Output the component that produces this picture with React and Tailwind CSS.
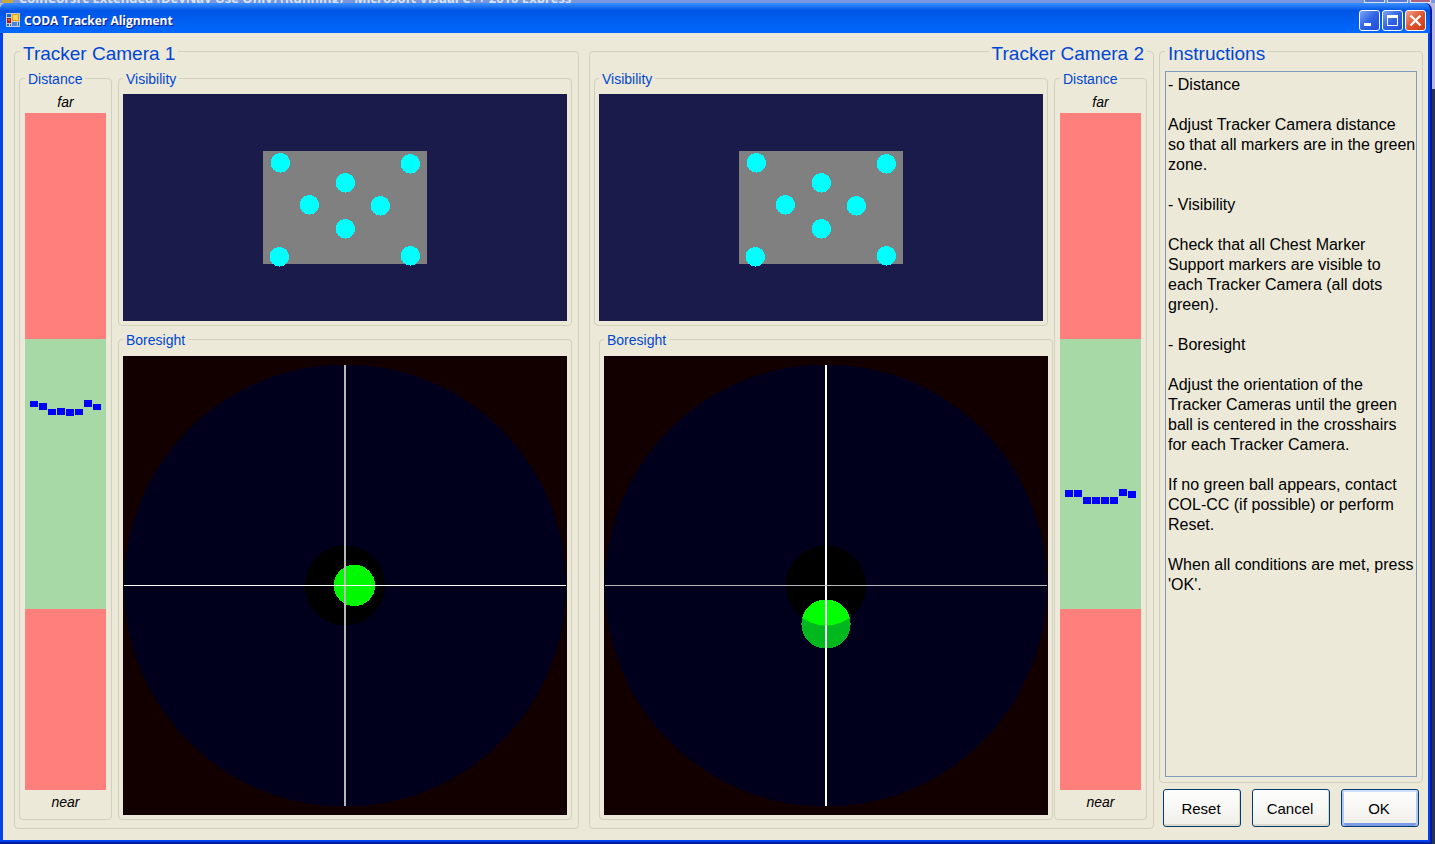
import React, { useId } from "react";

const INSTRUCTIONS = `- Distance

Adjust Tracker Camera distance so that all markers are in the green zone.

- Visibility

Check that all Chest Marker Support markers are visible to each Tracker Camera (all dots green).

- Boresight

Adjust the orientation of the Tracker Cameras until the green ball is centered in the crosshairs for each Tracker Camera.

If no green ball appears, contact COL-CC (if possible) or perform Reset.

When all conditions are met, press 'OK'.`;

const MARKERS = [
  [157, 69],
  [287, 70],
  [222, 89],
  [186, 111],
  [257, 112],
  [222, 135],
  [156, 163],
  [287, 162],
];

const DISTANCE_1 = [[5, 288, 6], [14, 290, 7], [23, 296, 6], [32, 295, 7], [41, 296, 7], [50, 296, 6], [59, 287, 7], [68, 291, 6]];
const DISTANCE_2 = [[5, 377, 7], [14, 377, 7], [23, 384, 7], [32, 384, 7], [41, 384, 7], [50, 384, 7], [59, 376, 7], [68, 378, 7]];

function Group({ title, className = "", children }) {
  return (
    <fieldset className={`min-w-0 rounded-[4px] border border-[#d0d0bf] ${className}`}>
      <legend className="px-[3px] pt-[2px] text-[14px] leading-4 text-[#0046d5]">{title}</legend>
      {children}
    </fieldset>
  );
}

function MainGroup({ title, className = "", legendClass = "", children }) {
  return (
    <fieldset className={`min-w-0 rounded-[4px] border border-[#d0d0bf] ${className}`}>
      <legend className={`px-[3px] pt-[6px] text-[19px] leading-6 text-[#0046d5] ${legendClass}`}>{title}</legend>
      {children}
    </fieldset>
  );
}

function Distance({ blocks }) {
  return (
    <Group title="Distance" className="flex w-[93px] shrink-0 flex-col px-[5px] pb-1">
      <div className="pt-1 text-center text-[14px] leading-[22px] italic">far</div>
      <svg viewBox="0 0 81 677" preserveAspectRatio="none" className="block min-h-0 w-full flex-1 basis-0" shapeRendering="crispEdges" role="img" aria-label="Marker distances">
        <rect width="81" height="677" fill="#ff7f7c" />
        <rect y="226" width="81" height="270" fill="#a6d9a6" />
        {blocks.map(([x, y, h]) => (
          <rect key={x} x={x} y={y} width="8" height={h} fill="#0000ff" />
        ))}
      </svg>
      <div className="text-center text-[14px] leading-[25px] italic">near</div>
    </Group>
  );
}

function Visibility({ className = "" }) {
  return (
    <Group title="Visibility" className={`px-1 pt-[7px] pb-1 ${className}`}>
      <svg viewBox="0 0 444 227" className="block h-auto w-full" shapeRendering="crispEdges" role="img" aria-label="Marker visibility">
        <rect width="444" height="227" fill="#1a1a4b" />
        <rect x="140" y="57" width="164" height="113" fill="#808080" />
        {MARKERS.map(([x, y]) => (
          <circle key={`${x}-${y}`} cx={x + 0.3} cy={y - 0.2} r="9.8" fill="#00ffff" />
        ))}
      </svg>
    </Group>
  );
}

function Boresight({ className = "", ball, outside, inside, vertical, horizontal }) {
  const clip = useId();
  return (
    <Group title="Boresight" className={`px-1 pt-2 pb-1 ${className}`}>
      <svg viewBox="0 0 444 459" className="block h-auto w-full" shapeRendering="crispEdges" role="img" aria-label="Boresight">
        <clipPath id={clip}>
          <circle cx="222" cy="229.5" r="40" />
        </clipPath>
        <rect width="444" height="459" fill="#120000" />
        <circle cx="222" cy="229.5" r="221" fill="#00001c" />
        <circle cx="222" cy="229.5" r="40" fill="#000000" />
        <circle cx={ball.x} cy={ball.y} r={ball.r} fill={outside} />
        <circle cx={ball.x} cy={ball.y} r={ball.r} fill={inside} clipPath={`url(#${clip})`} />
        <rect x="221" y="9" width="2" height="441" fill={vertical} />
        <rect x="1" y="229" width="442" height="1" fill={horizontal} />
      </svg>
    </Group>
  );
}

function AppIcon() {
  return (
    <svg viewBox="0 0 14 14" className="size-[14px]" shapeRendering="crispEdges" aria-hidden="true">
      <rect width="14" height="14" fill="#c8ccd0" />
      <rect x="1" y="1" width="4" height="3" fill="#1d62d8" />
      <rect x="6" y="1" width="7" height="7" fill="#e8a200" />
      <rect x="7" y="2" width="5" height="5" fill="#ffd659" />
      <rect x="1" y="5" width="4" height="5" fill="#a81818" />
      <rect x="2" y="6" width="2" height="2" fill="#e05040" />
      <rect x="1" y="11" width="4" height="2" fill="#1d62d8" />
      <rect x="6" y="9" width="5" height="4" fill="#4a86e0" />
      <rect x="12" y="9" width="1" height="4" fill="#1d62d8" />
      <rect x="3" y="11" width="1" height="2" fill="#e6e9ec" />
    </svg>
  );
}

function CaptionButton({ label, close, children }) {
  const tone = close
    ? "bg-linear-to-br from-[#f0a08a] via-[#e0532d] to-[#c83a10]"
    : "bg-linear-to-br from-[#7ea4f4] via-[#2f62e4] to-[#1d50d8]";
  return (
    <button type="button" aria-label={label} className={`size-[21px] rounded-[3px] border border-white ${tone}`}>
      <svg viewBox="0 0 19 19" className="block size-[19px]" aria-hidden="true">
        {children}
      </svg>
    </button>
  );
}

function DialogButton({ isDefault, children }) {
  const ring = isDefault
    ? "shadow-[inset_0_2px_0_#cee0fc,inset_2px_0_0_#b0c8f4,inset_-2px_0_0_#b0c8f4,inset_0_-3px_0_#7a9ae4]"
    : "shadow-[inset_-1px_-2px_0_#dcd8cc]";
  return (
    <button type="button" className={`h-[38px] flex-1 rounded-[3px] border border-[#003c74] bg-linear-to-b from-white to-[#efeee8] pt-[2px] pr-[2px] text-[15px] ${ring}`}>
      {children}
    </button>
  );
}

function BackgroundWindow() {
  return (
    <div className="flex h-[3px] shrink-0 items-end gap-[2px] overflow-hidden bg-[#7a96df] pr-1 pl-[2px] font-['Open_Sans',sans-serif] text-[13px] leading-[10px] font-bold text-[#d8e4f8]">
      <span className="h-[3px] w-[11px] bg-[#c8a838]" />
      <span className="flex-1 truncate pl-1">CoinCorsrc Extended (DevNav Use Only) (Running) - Microsoft Visual C++ 2010 Express</span>
      <span className="h-[3px] w-[21px] border-x border-b border-[#d8e4f8] bg-[#5a78d8]" />
      <span className="h-[3px] w-[21px] border-x border-b border-[#d8e4f8] bg-[#5a78d8]" />
      <span className="h-[3px] w-[21px] border-x border-b border-[#d8e4f8] bg-[#b06078]" />
    </div>
  );
}

export default function App() {
  return (
    <div className="flex min-h-screen flex-col bg-[linear-gradient(#b8b8dc_89px,#28324e_89px)] font-['Liberation_Sans',Arial,sans-serif] text-black">
      <BackgroundWindow />
      <div className="mr-[3px] flex flex-1 flex-col rounded-t-[7px] border-r-2 border-b-2 border-[#001a9c] bg-[#0042e4]">
        <header className="flex h-[30px] shrink-0 items-center gap-1 rounded-t-[6px] bg-linear-to-b from-[#3a90ff] via-[#0055e5] via-25% to-[#0068ff] pt-1 pr-1 pl-[6px]">
          <AppIcon />
          <h1 className="flex-1 pt-px font-['Open_Sans',sans-serif] text-[12px] font-bold text-white [text-shadow:1px_1px_0_#0a1883]">CODA Tracker Alignment</h1>
          <div className="flex gap-[2px]">
            <CaptionButton label="Minimize">
              <rect x="4" y="12" width="7" height="3" fill="#fff" />
            </CaptionButton>
            <CaptionButton label="Maximize">
              <path d="M4 4h11v11H4zM5 7v7h9V7z" fill="#fff" fillRule="evenodd" />
            </CaptionButton>
            <CaptionButton label="Close" close>
              <path d="M4.500 4.500L14.500 14.500M14.500 4.500L4.500 14.500" stroke="#fff" strokeWidth="2.300" />
            </CaptionButton>
          </div>
        </header>
        <main className="flex flex-1 border-r-2 border-b-2 border-l-[3px] border-[#0042f0] bg-[#ece9d8] pt-[3px] pr-[5px] pb-[11px] pl-[11px]">
          <MainGroup title="Tracker Camera 1" legendClass="ml-px" className="mr-[10px] flex flex-1 gap-[6px] pt-[3px] pr-[6px] pb-2 pl-1">
            <Distance blocks={DISTANCE_1} />
            <div className="flex min-w-0 flex-1 flex-col gap-1">
              <Visibility />
              <Boresight ball={{ x: 231.5, y: 229.5, r: 20.7 }} outside="#00ff00" inside="#00f800" vertical="#b8b8b8" horizontal="#ffffff" />
            </div>
          </MainGroup>
          <MainGroup title="Tracker Camera 2" legendClass="ml-auto" className="mr-[5px] flex flex-1 gap-px pt-[3px] pr-[6px] pb-2 pl-1">
            <div className="flex min-w-0 flex-1 flex-col gap-1">
              <Visibility className="mr-[5px]" />
              <Boresight className="ml-[5px]" ball={{ x: 222, y: 268, r: 24.6 }} outside="#00b81e" inside="#00ff00" vertical="#ffffff" horizontal="#b8b8b8" />
            </div>
            <Distance blocks={DISTANCE_2} />
          </MainGroup>
          <aside className="flex w-[264px] shrink-0 flex-col">
            <MainGroup title={<label htmlFor="instructions">Instructions</label>} className="flex flex-1 flex-col px-[5px] pt-[5px] pb-[5px]">
              <textarea
                id="instructions"
                readOnly
                defaultValue={INSTRUCTIONS}
                className="block w-full flex-1 resize-none overflow-hidden border border-[#7f9db9] bg-transparent pt-[3px] pr-0 pl-[2px] text-[16px] leading-5 outline-none"
              />
            </MainGroup>
            <div className="mt-[6px] mb-[2px] flex gap-[11px] px-1">
              <DialogButton>Reset</DialogButton>
              <DialogButton>Cancel</DialogButton>
              <DialogButton isDefault>OK</DialogButton>
            </div>
          </aside>
        </main>
      </div>
    </div>
  );
}
